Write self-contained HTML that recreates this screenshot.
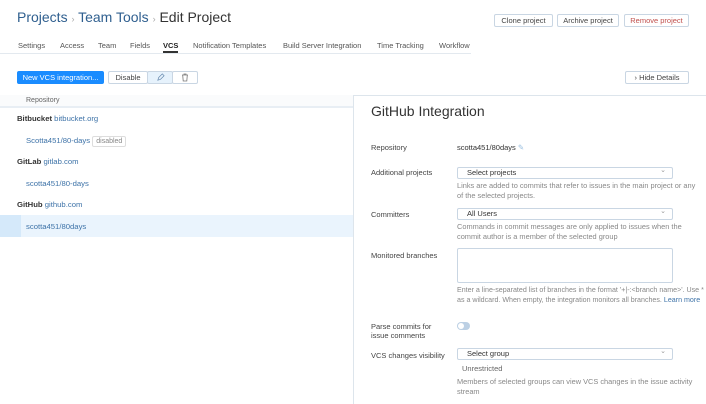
<!DOCTYPE html>
<html><head><style>
*{margin:0;padding:0;box-sizing:border-box}
body{width:706px;height:404px;overflow:hidden;background:#fff;font-family:"Liberation Sans",sans-serif;color:#333;position:relative;font-size:8px}
.a{position:absolute;white-space:nowrap}
.btn{position:absolute;border:1px solid #c9d6e3;border-radius:2px;height:13px;line-height:11px;text-align:center;font-size:7.5px;color:#444;background:#fff}
.lnk{color:#3e73a8}
.lbl{position:absolute;left:371px;font-size:7.5px;color:#444}
.sel{position:absolute;left:457px;width:216px;height:12px;border:1px solid #c9d6e3;border-radius:2px;font-size:7.5px;line-height:10px;padding-left:9px;color:#333}
.sel:after{content:"⌄";position:absolute;right:6px;top:-2px;color:#999;font-size:7px}
.hint{position:absolute;left:457px;width:240px;font-size:7.4px;line-height:10px;color:#888;white-space:normal}
</style></head><body>
<div class="a" style="left:17px;top:9px;font-size:14px;color:#2f5f8f">Projects <span style="color:#aaa;font-size:9px">›</span> Team Tools <span style="color:#aaa;font-size:9px">›</span> <span style="color:#333">Edit Project</span></div>
<div class="btn" style="left:494px;top:14px;width:59px">Clone project</div>
<div class="btn" style="left:557px;top:14px;width:62px">Archive project</div>
<div class="btn" style="left:624px;top:14px;width:65px;color:#c0504d">Remove project</div>
<div class="a" style="left:0;top:53px;width:471px;height:1px;background:#e3e9ef"></div>
<div class="a" style="top:41px;font-size:7.5px;color:#555;left:18px">Settings</div>
<div class="a" style="top:41px;font-size:7.5px;color:#555;left:60px">Access</div>
<div class="a" style="top:41px;font-size:7.5px;color:#555;left:98px">Team</div>
<div class="a" style="top:41px;font-size:7.5px;color:#555;left:130px">Fields</div>
<div class="a" style="top:41px;font-size:7.5px;color:#222;font-weight:bold;left:163px">VCS</div>
<div class="a" style="left:163px;top:51px;width:15px;height:2px;background:#333"></div>
<div class="a" style="top:41px;font-size:7.5px;color:#555;left:193px">Notification Templates</div>
<div class="a" style="top:41px;font-size:7.5px;color:#555;left:283px">Build Server Integration</div>
<div class="a" style="top:41px;font-size:7.5px;color:#555;left:377px">Time Tracking</div>
<div class="a" style="top:41px;font-size:7.5px;color:#555;left:439px">Workflow</div>
<div class="btn" style="left:17px;top:71px;width:87px;background:#1a8cff;border-color:#1a8cff;color:#fff">New VCS integration...</div>
<div class="btn" style="left:108px;top:71px;width:40px">Disable</div>
<div class="btn" style="left:147px;top:71px;width:26px;background:#e6f2fc"><svg width="9" height="9" viewBox="0 0 10 10" style="margin-top:1px"><path d="M2 8l1-3 4-4 2 2-4 4z" fill="none" stroke="#6a8cb0" stroke-width=".8"/></svg></div>
<div class="btn" style="left:172px;top:71px;width:26px"><svg width="8" height="9" viewBox="0 0 8 9" style="margin-top:1px"><path d="M1 2h6M3 2V1h2v1M1.7 2l.5 6h3.6l.5-6" fill="none" stroke="#777" stroke-width=".8"/></svg></div>
<div class="btn" style="left:625px;top:71px;width:64px">› Hide Details</div>
<div class="a" style="left:0;top:95px;width:353px;height:12px;background:#fafbfc"></div>
<div class="a" style="left:26px;top:97px;font-size:7px;color:#666">Repository</div>
<div class="a" style="left:0;top:106px;width:353px;height:2px;background:#e8eef4"></div>
<div class="a" style="left:17px;top:114px;font-size:7.7px"><b>Bitbucket</b> <span class="lnk">bitbucket.org</span></div>
<div class="a lnk" style="left:26px;top:136px;font-size:7.7px">Scotta451/80-days <span style="display:inline-block;border:1px solid #ddd;border-radius:2px;padding:0 3px;color:#888;font-size:7px;line-height:9px">disabled</span></div>
<div class="a" style="left:17px;top:157px;font-size:7.7px"><b>GitLab</b> <span class="lnk">gitlab.com</span></div>
<div class="a lnk" style="left:26px;top:179px;font-size:7.7px">scotta451/80-days</div>
<div class="a" style="left:17px;top:200px;font-size:7.7px"><b>GitHub</b> <span class="lnk">github.com</span></div>
<div class="a" style="left:0;top:215px;width:353px;height:22px;background:#eaf4fd"></div>
<div class="a" style="left:0;top:215px;width:21px;height:22px;background:#d5e9fa"></div>
<div class="a lnk" style="left:26px;top:222px;font-size:7.7px">scotta451/80days</div>
<div class="a" style="left:353px;top:95px;width:353px;height:309px;border-left:1px solid #dde5ec;border-top:1px solid #dde5ec"></div>
<div class="a" style="left:371px;top:103px;font-size:14px;color:#333">GitHub Integration</div>
<div class="lbl" style="top:143px">Repository</div>
<div class="a" style="left:457px;top:143px;font-size:7.5px">scotta451/80days <span style="color:#9cc0e0">✎</span></div>
<div class="lbl" style="top:168px">Additional projects</div>
<div class="sel" style="top:167px">Select projects</div>
<div class="hint" style="top:181px">Links are added to commits that refer to issues in the main project or any of the selected projects.</div>
<div class="lbl" style="top:210px">Committers</div>
<div class="sel" style="top:208px">All Users</div>
<div class="hint" style="top:222px">Commands in commit messages are only applied to issues when the commit author is a member of the selected group</div>
<div class="lbl" style="top:251px">Monitored branches</div>
<div class="a" style="left:457px;top:248px;width:216px;height:35px;border:1px solid #c9d6e3;border-radius:2px"></div>
<div class="hint" style="top:285px;width:249px;font-size:7.1px">Enter a line-separated list of branches in the format '+|-:&lt;branch name&gt;'. Use * as a wildcard. When empty, the integration monitors all branches. <span class="lnk">Learn more</span></div>
<div class="lbl" style="top:322px;line-height:9px">Parse commits for<br>issue comments</div>
<div class="a" style="left:457px;top:322px;width:13px;height:8px;border-radius:4px;background:#bcd0e4"><div style="position:absolute;left:1px;top:1px;width:6px;height:6px;border-radius:50%;background:#fff"></div></div>
<div class="lbl" style="top:351px">VCS changes visibility</div>
<div class="sel" style="top:348px">Select group</div>
<div class="a" style="left:462px;top:364px;font-size:7.5px;color:#666">Unrestricted</div>
<div class="hint" style="top:377px">Members of selected groups can view VCS changes in the issue activity stream</div>
</body></html>
